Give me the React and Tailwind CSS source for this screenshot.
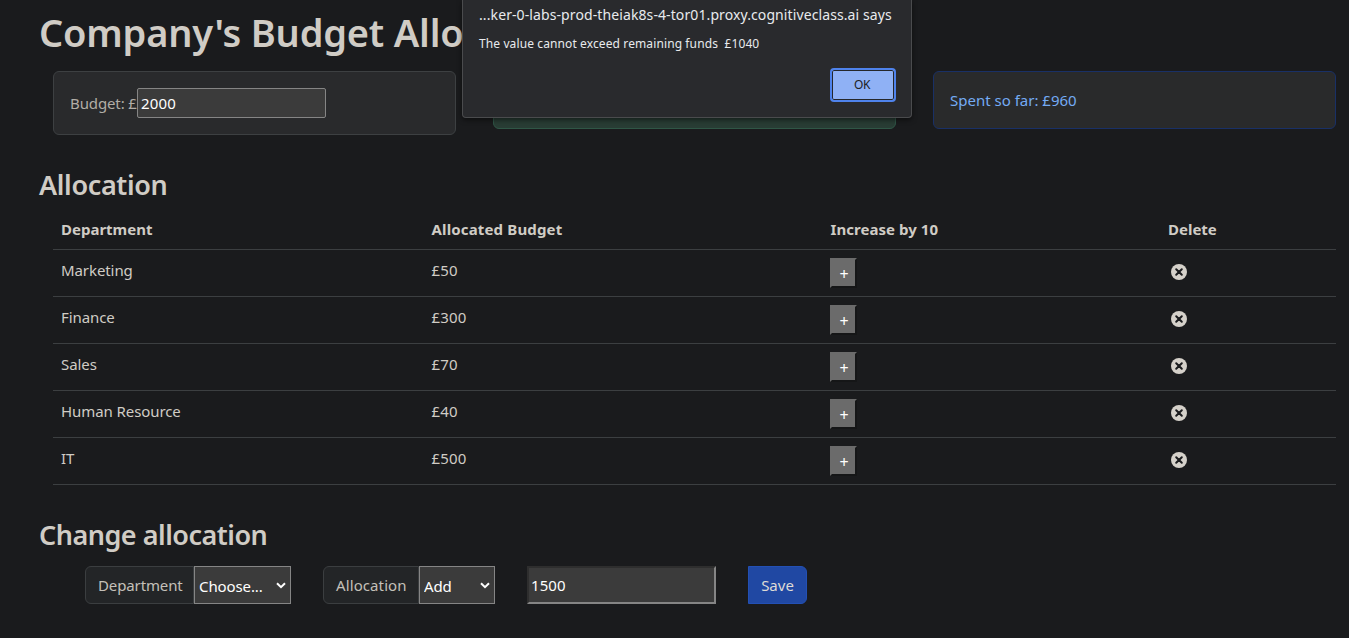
import React, { useState } from "react";

const departments = [
  { name: "Marketing", cost: 50 },
  { name: "Finance", cost: 300 },
  { name: "Sales", cost: 70 },
  { name: "Human Resource", cost: 40 },
  { name: "IT", cost: 500 },
];

function DeleteIcon() {
  return (
    <svg viewBox="0 0 16 16" className="size-4 fill-[#d5d1ca]">
      <circle cx="8" cy="8" r="8" />
      <path d="M5.2 5.2l5.6 5.6M10.8 5.2l-5.6 5.6" className="stroke-[#1a1b1d]" strokeWidth="2" strokeLinecap="round" />
    </svg>
  );
}

function Chevron({ className }) {
  return (
    <svg viewBox="0 0 10 7" className={`pointer-events-none absolute h-[7px] w-[10px] ${className}`} fill="none" stroke="#fff" strokeWidth="2">
      <path d="M1 1.2l4 4 4-4" />
    </svg>
  );
}

function Field({ label, labelClass, selectClass, options }) {
  return (
    <div className="flex h-[38px]">
      <span className={`flex items-center rounded-l-md border border-[#3b3e40] bg-[#232527] pl-3 text-[#c4c0b9] ${labelClass}`}>{label}</span>
      <div className={`relative ${selectClass}`}>
        <select className="block h-full w-full appearance-none border border-[#858585] bg-[#3b3b3b] pt-0.5 pl-1 tracking-[-0.1px] text-white outline-none">
          {options.map((o) => (
            <option key={o}>{o}</option>
          ))}
        </select>
        <Chevron className="top-4 right-[5px]" />
      </div>
    </div>
  );
}

function AlertDialog() {
  return (
    <div role="alertdialog" className="absolute top-0 left-[462px] flex h-[118px] w-[450px] flex-col rounded-b-[4px] border border-t-0 border-[#4a4b4d] bg-[#292a2d] pr-4 pl-4 text-[#e8eaed] shadow-[0_2px_5px_rgba(0,0,0,0.5)]">
      <p className="mt-1 h-[22px] text-[14px] leading-[22px] tracking-[0.1px] whitespace-nowrap">...ker-0-labs-prod-theiak8s-4-tor01.proxy.cognitiveclass.ai says</p>
      <p className="mt-[8px] h-[20px] text-[12px] leading-[20px] tracking-[0.11px] whitespace-pre">{"The value cannot exceed remaining funds  £1040"}</p>
      <button className="mt-[14px] -mr-px h-[34px] w-[66px] self-end rounded-[4px] border-2 border-[#4f83ec] bg-[#8fb1f5] pr-0.5 text-[12px] tracking-[-0.3px] text-[#202124] inset-ring inset-ring-[#25272b]">OK</button>
    </div>
  );
}

export default function App() {
  const [budget, setBudget] = useState("2000");
  const [amount, setAmount] = useState("1500");
  return (
    <div className="relative h-[638px] w-full overflow-hidden bg-[#1a1b1d] pt-2 pl-[39px] font-['Noto_Sans','Open_Sans',sans-serif] text-[15px] leading-6 text-[#d0ccc5]">
      <h1 className="h-12 text-[38px] leading-[48px] font-semibold tracking-[-0.2px] whitespace-nowrap">Company's Budget Allo</h1>

      <div className="mt-[15px] ml-[14px] flex h-16 items-start gap-[37px]">
        <div className="flex h-16 w-[403px] items-center rounded-md border border-[#3d4042] bg-[#292a2c] pl-4 text-[#b1ada6]">
          <span className="w-[67px] tracking-[-0.12px] whitespace-nowrap">Budget: £</span>
          <input value={budget} onChange={(e) => setBudget(e.target.value)} className="h-[30px] w-[189px] rounded-[2px] border border-[#858585] bg-[#3b3b3b] px-[3px] tracking-[0.2px] text-white outline-none" />
        </div>
        <div className="h-[58px] w-[403px] rounded-md border border-[#2f5646] bg-[#283c34]" />
        <div className="h-[58px] w-[403px] rounded-md border border-[#193066] bg-[#292a2b] p-4 text-[#74abf4]">Spent so far: £960</div>
      </div>

      <h3 className="mt-[33px] h-[34px] text-[27px] leading-[34px] font-semibold tracking-[-0.35px]">Allocation</h3>
      <table className="mt-[6px] ml-[14px] w-[1283px] table-fixed border-collapse text-left">
        <colgroup>
          <col className="w-[370px]" />
          <col className="w-[399px]" />
          <col className="w-[338px]" />
          <col className="w-[176px]" />
        </colgroup>
        <thead>
          <tr className="h-[41px] border-b border-[#3c3f41] font-bold">
            <th className="px-2 pt-0.5">Department</th>
            <th className="px-2 pt-0.5 pl-[8.5px] tracking-[0.15px]">Allocated Budget</th>
            <th className="px-2 pt-0.5 pl-[8.5px] tracking-[0.05px]">Increase by 10</th>
            <th className="px-2 pt-0.5">Delete</th>
          </tr>
        </thead>
        <tbody>
          {departments.map((d) => (
            <tr key={d.name} className="h-[47px] border-b border-[#3c3f41]">
              <td className="px-2 pb-1.5 tracking-[-0.08px]">{d.name}</td>
              <td className="pr-2 pb-1.5 pl-[8.5px] tracking-[0.15px]">£{d.cost}</td>
              <td className="px-2">
                <button className="block h-[30px] w-[27px] border-2 border-t-[#6b6b6b] border-r-[#151617] border-b-[#151617] border-l-[#6b6b6b] bg-[#6b6b6b] pt-[3px] pl-px text-[16px] leading-none text-white">+</button>
              </td>
              <td className="pb-px pl-[11px]">
                <DeleteIcon />
              </td>
            </tr>
          ))}
        </tbody>
      </table>

      <h3 className="mt-[33px] h-[34px] text-[27px] leading-[34px] font-semibold tracking-[-0.5px]">Change allocation</h3>
      <div className="mt-[14px] ml-[46px] flex gap-8">
        <Field label="Department" labelClass="w-[109px] tracking-[-0.12px]" selectClass="w-[97px]" options={["Choose...", ...departments.map((d) => d.name)]} />
        <Field label="Allocation" labelClass="w-24 tracking-[0.1px]" selectClass="w-[76px]" options={["Add", "Reduce"]} />
        <input value={amount} onChange={(e) => setAmount(e.target.value)} className="h-[38px] w-[189px] border-2 border-t-[#2e2e2e] border-r-[#858585] border-b-[#858585] border-l-[#2e2e2e] bg-[#3b3b3b] px-[2px] tracking-[0.1px] text-white outline-none" />
        <button className="h-[38px] w-[59px] rounded-r-md border border-[#2350b4] bg-[#2048a3] text-[#dedbd6]">Save</button>
      </div>

      <AlertDialog />
    </div>
  );
}
